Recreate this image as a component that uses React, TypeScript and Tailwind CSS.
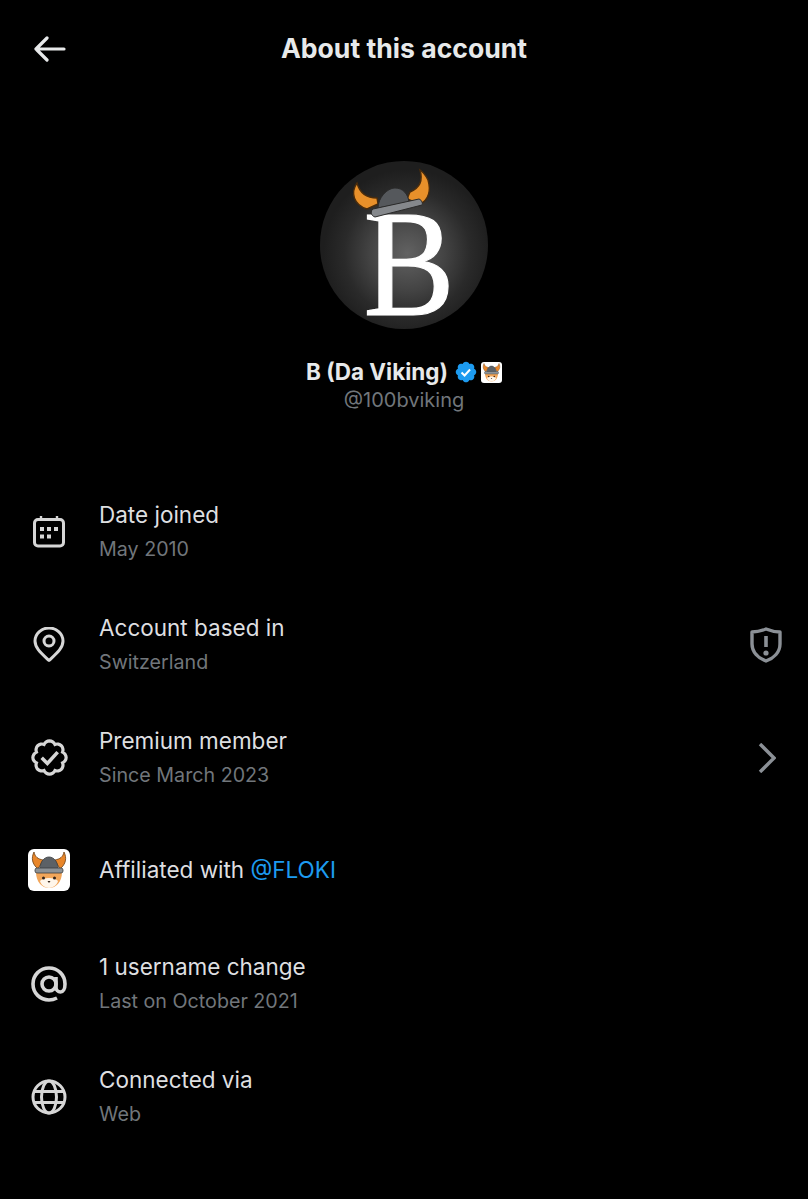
import { type ReactNode } from "react";

const BADGE_OUTLINE =
  "M20.396 11c-.018-.646-.215-1.275-.57-1.816-.354-.54-.852-.972-1.438-1.246.223-.607.27-1.264.14-1.897-.131-.634-.437-1.218-.882-1.687-.47-.445-1.053-.75-1.687-.882-.633-.13-1.29-.083-1.897.14-.273-.587-.704-1.086-1.245-1.44S11.647 1.62 11 1.604c-.646.017-1.273.213-1.813.568s-.969.854-1.24 1.44c-.608-.223-1.267-.272-1.902-.14-.635.13-1.22.436-1.69.882-.445.47-.749 1.055-.878 1.688-.13.633-.08 1.29.144 1.896-.587.274-1.087.705-1.443 1.245-.356.54-.555 1.17-.574 1.817.02.647.218 1.276.574 1.817.356.54.856.972 1.443 1.245-.224.606-.274 1.263-.144 1.896.13.634.433 1.218.877 1.688.47.443 1.054.747 1.687.878.633.132 1.29.084 1.897-.136.274.586.705 1.084 1.246 1.439.54.354 1.17.551 1.816.569.647-.016 1.276-.213 1.817-.567s.972-.854 1.245-1.44c.604.239 1.266.296 1.903.164.636-.132 1.22-.447 1.68-.907.46-.46.776-1.044.908-1.681s.075-1.299-.165-1.903c.586-.274 1.084-.705 1.439-1.246.354-.54.551-1.17.569-1.816z";

function FlokiLogo({ className }: { className: string }) {
  return (
    <svg viewBox="0 0 42 42" className={className}>
      <rect width="42" height="42" rx="6" fill="#ffffff" />
      <path d="M10 20C4 15 3 9 6 3c1 5 4 7 9 8z" fill="#e8862a" stroke="#6b3d10" strokeWidth="0.8" />
      <path d="M32 20c6-5 7-11 4-17-1 5-4 7-9 8z" fill="#e8862a" stroke="#6b3d10" strokeWidth="0.8" />
      <path d="M8 23c0 10 6 16 13 16s13-6 13-16z" fill="#f2a65a" />
      <path d="M12 32c3-4 15-4 18 0-1 4-5 7-9 7s-8-3-9-7z" fill="#fff6ea" />
      <path d="M12 20c0-7 4-12 9-12s9 5 9 12z" fill="#5c6166" stroke="#3a3d40" strokeWidth="0.8" />
      <rect x="7" y="19" width="28" height="5" rx="2" fill="#8d9296" stroke="#3a3d40" strokeWidth="0.8" />
      <circle cx="15.5" cy="29" r="1.5" fill="#33241a" />
      <circle cx="26.5" cy="29" r="1.5" fill="#33241a" />
      <path d="M19.5 32h3l-1.5 2z" fill="#33241a" />
    </svg>
  );
}

function Avatar() {
  return (
    <svg viewBox="0 0 168 168" className="h-[168px] w-[168px] overflow-visible">
      <defs>
        <radialGradient id="glow" cx="52%" cy="55%" r="50%">
          <stop offset="0%" stopColor="#626262" />
          <stop offset="45%" stopColor="#434343" />
          <stop offset="75%" stopColor="#2a2a2a" />
          <stop offset="100%" stopColor="#1e1e1e" />
        </radialGradient>
      </defs>
      <circle cx="84" cy="84" r="84" fill="url(#glow)" />
      <text
        transform="translate(89 154) scale(0.9 1)"
        textAnchor="middle"
        fontFamily="'Liberation Serif', serif"
        fontSize="152"
        fill="#ffffff"
        stroke="#ffffff"
        strokeWidth="1.2"
      >
        B
      </text>
      <path d="M37 22C30 32 34 44 47 48l11-5-1-6C48 37 40 33 37 22z" fill="#e8902a" stroke="#4a2c0c" strokeWidth="1.4" />
      <path d="M100 9c3 10 0 18-10 22l-3 7 13 5c9-4 11-14 8-24-2-4-5-8-8-10z" fill="#e8902a" stroke="#4a2c0c" strokeWidth="1.4" />
      <path d="M58 47c0-10 9-20 17-20s13 6 14 14z" fill="#55585c" stroke="#2a2a2a" strokeWidth="1" />
      <path d="M53 48l46-10c3 1 4 5 3 6L55 56c-4-1-5-6-2-8z" fill="#85888c" stroke="#2a2a2a" strokeWidth="1" />
    </svg>
  );
}

const icons: Record<string, ReactNode> = {
  calendar: (
    <svg viewBox="0 0 32 32" className="h-8 w-8" fill="none" stroke="#d6d6d6" strokeWidth="3">
      <rect x="1.5" y="3.5" width="29" height="26.5" rx="3.5" />
      <path d="M8 0v5M24 0v5" strokeWidth="2.4" />
      <g fill="#d6d6d6" stroke="none">
        <rect x="7" y="11" width="4" height="4" />
        <rect x="14" y="11" width="4" height="4" />
        <rect x="21" y="11" width="4" height="4" />
        <rect x="7" y="18.5" width="4" height="4" />
        <rect x="14" y="18.5" width="4" height="4" />
      </g>
    </svg>
  ),
  pin: (
    <svg viewBox="0 0 32 36" className="h-9 w-8" fill="none" stroke="#d6d6d6" strokeWidth="3">
      <path d="M16 33.5C8 26 2 21 2 14a14 13 0 0 1 28 0c0 7-6 12-14 19.5z" strokeLinejoin="round" />
      <circle cx="16" cy="14" r="5" />
    </svg>
  ),
  premium: (
    <svg viewBox="0 0 22 22" className="h-[39px] w-[39px]" fill="none" stroke="#d6d6d6" strokeWidth="1.8">
      <path d={BADGE_OUTLINE} />
      <path d="M6.6 11.2l3.2 3.2 5.8-6.4" strokeWidth="2" />
    </svg>
  ),
  at: (
    <svg viewBox="0 0 36 36" className="h-9 w-9" fill="none" stroke="#d6d6d6" strokeWidth="3.6">
      <circle cx="18" cy="18" r="7" />
      <path d="M25 11v10c0 3 2 5 4.5 5S34 23 34 18C34 9 27 2 18 2S2 9 2 18s7 16 16 16c3 0 6-1 8-2" />
    </svg>
  ),
  globe: (
    <svg viewBox="0 0 36 36" className="h-9 w-9" fill="none" stroke="#d6d6d6" strokeWidth="3">
      <circle cx="18" cy="18" r="16" />
      <ellipse cx="18" cy="18" rx="7.5" ry="16" />
      <path d="M3 12.5h30M3 23.5h30" />
    </svg>
  ),
};

function Row({
  icon,
  title,
  sub,
  trailing,
  className = "",
}: {
  icon: ReactNode;
  title: ReactNode;
  sub?: string;
  trailing?: ReactNode;
  className?: string;
}) {
  return (
    <div className={`flex h-[113px] items-center pl-7 pr-[26px] ${className}`}>
      <div className="flex w-[71px] shrink-0 items-center">
        <div className="flex w-[42px] justify-center">{icon}</div>
      </div>
      <div className="flex-1">
        <div className="text-[22.5px] leading-[32px] text-[#dedfe0]">{title}</div>
        {sub && <div className="mt-[2px] text-[19.7px] leading-[32px] text-[#71767b]">{sub}</div>}
      </div>
      {trailing}
    </div>
  );
}

export default function App() {
  return (
    <div className="h-[1199px] w-[808px] overflow-hidden bg-black font-['Inter',sans-serif]">
      <header className="relative flex h-24 items-center justify-center pt-[2px]">
        <svg viewBox="0 0 32 26" className="absolute left-[34px] top-[36px] h-[26px] w-8" fill="none" stroke="#e7e9ea" strokeWidth="3.2" strokeLinecap="round" strokeLinejoin="round">
          <path d="M2 13h28M13 2L2 13l11 11" />
        </svg>
        <h1 className="text-[26.6px] font-bold text-[#e7e9ea]">About this account</h1>
      </header>

      <section className="flex flex-col items-center pt-[65px]">
        <Avatar />
        <div className="mt-[27px] flex h-8 items-center">
          <span className="text-[22.5px] font-bold text-[#e7e9ea]">B (Da Viking)</span>
          <svg viewBox="0 0 22 22" className="ml-[6px] h-6 w-6 shrink-0">
            <path fill="#1d9bf0" d={BADGE_OUTLINE} />
            <path fill="none" stroke="#ffffff" strokeWidth="1.8" d="M6.9 11.4l2.8 2.8 5-5.5" />
          </svg>
          <FlokiLogo className="ml-[3px] h-[21px] w-[21px]" />
        </div>
        <div className="-mt-px text-[20px] leading-[26px] text-[#71767b]">@100bviking</div>
      </section>

      <div className="mt-[62px] flex flex-col">
        <Row icon={icons.calendar} title="Date joined" sub="May 2010" />
        <Row
          icon={icons.pin}
          title="Account based in"
          sub="Switzerland"
          trailing={
            <svg viewBox="0 0 32 36" className="h-9 w-8 shrink-0" fill="none" stroke="#8b9096" strokeWidth="3.4">
              <path d="M16 2c5 2 9 3 14 3v12c0 8-6 14-14 17C8 31 2 25 2 17V5c5 0 9-1 14-3z" strokeLinejoin="round" />
              <path d="M16 9v11" strokeWidth="3.6" />
              <circle cx="16" cy="26" r="2.6" fill="#8b9096" stroke="none" />
            </svg>
          }
        />
        <Row
          icon={icons.premium}
          title="Premium member"
          sub="Since March 2023"
          trailing={
            <svg viewBox="0 0 18 30" className="mr-[6px] h-[30px] w-[18px] shrink-0" fill="none" stroke="#8b9096" strokeWidth="3.4">
              <path d="M2 1l14 14L2 29" />
            </svg>
          }
        />
        <Row
          className="pb-[2px]"
          icon={<FlokiLogo className="h-[42px] w-[42px]" />}
          title={
            <>
              Affiliated with <span className="text-[#1d9bf0]">@FLOKI</span>
            </>
          }
        />
        <Row icon={icons.at} title="1 username change" sub="Last on October 2021" />
        <Row icon={icons.globe} title="Connected via" sub="Web" />
      </div>
    </div>
  );
}
